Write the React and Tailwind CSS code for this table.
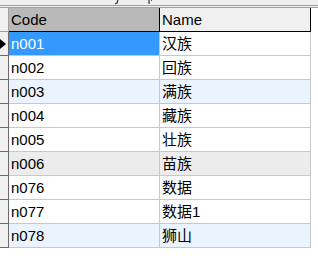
const rows = [
  { code: 'n001', name: '汉族', tone: 'current' },
  { code: 'n002', name: '回族' },
  { code: 'n003', name: '满族', tone: 'alt' },
  { code: 'n004', name: '藏族' },
  { code: 'n005', name: '壮族' },
  { code: 'n006', name: '苗族', tone: 'hover' },
  { code: 'n076', name: '数据' },
  { code: 'n077', name: '数据1' },
  { code: 'n078', name: '狮山', tone: 'alt' },
];

const rowBg = {
  alt: 'bg-[#ebf4fe]',
  hover: 'bg-[#ececec]',
};

export default function App() {
  return (
    <div className="w-[318px] h-[271px] overflow-hidden bg-white text-[15px] leading-none text-black [font-family:'Liberation_Sans','Noto_Sans_CJK_SC',sans-serif]">
      {/* caption strip: only the tails of the caption glyphs are left in view */}
      <div className="h-[5px] bg-[#f0f0f0] flex">
        <svg width="318" height="5" viewBox="0 0 318 5">
          <path d="M118 0 L117 3 L115 4" stroke="#333" strokeWidth="1.2" fill="none" />
          <path d="M149 0 L149 4" stroke="#333" strokeWidth="1.2" fill="none" />
          <path d="M152 0 L151 1" stroke="#555" strokeWidth="1" fill="none" />
        </svg>
      </div>
      <div className="h-px bg-[#a0a0a0]" />
      <div className="h-px bg-[#f0f0f0]" />
      <div className="h-px bg-[#a0a0a0]" />

      <div className="grid grid-cols-[9px_151px_151px] w-[311px]">
        {/* header */}
        <div className="h-[24px] bg-[#f0f0f0] border-r border-b border-[#a0a0a0]" />
        <div className="h-[24px] bg-[#b9b9b9] border-r border-b border-black flex items-center pl-[2px]">Code</div>
        <div className="h-[24px] bg-[#f0f0f0] border-r border-b border-black flex items-center pl-[2px]">Name</div>

        {rows.map((r) => (
          <Row key={r.code} {...r} />
        ))}
      </div>
    </div>
  );
}

function Row({ code, name, tone }) {
  const current = tone === 'current';
  const bg = rowBg[tone] || 'bg-white';
  return (
    <>
      <div className="h-[24px] bg-[#f0f0f0] border-r border-b border-[#6b6b6b] flex items-center">
        {current && (
          <svg width="7" height="10" viewBox="0 0 7 10">
            <path d="M0 0 L6 5 L0 10 Z" fill="#000" />
          </svg>
        )}
      </div>
      <div
        className={`h-[24px] border-r border-b border-[#c8c8c8] flex items-center pl-[2px] ${
          current ? 'bg-[#3399ff] text-white' : bg
        }`}
      >
        {code}
      </div>
      <div className={`h-[24px] border-r border-b border-[#c8c8c8] flex items-center pl-[2px] ${current ? 'bg-white' : bg}`}>
        {name}
      </div>
    </>
  );
}
